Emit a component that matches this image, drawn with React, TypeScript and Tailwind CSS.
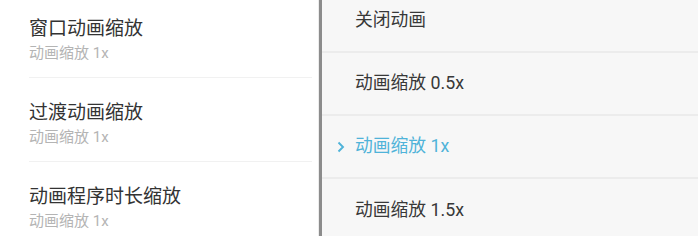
import React from 'react';

const font = { fontFamily: 'Roboto, "Noto Sans CJK SC", "Noto Sans", sans-serif' };

const settings = [
  { title: '窗口动画缩放', value: '动画缩放 1x' },
  { title: '过渡动画缩放', value: '动画缩放 1x' },
  { title: '动画程序时长缩放', value: '动画缩放 1x' },
];

const options = ['关闭动画', '动画缩放 0.5x', '动画缩放 1x', '动画缩放 1.5x'];

export default function App() {
  const selected = 2;
  return (
    <div className="flex h-[236px] w-[698px] overflow-hidden bg-white" style={font}>
      {/* settings list */}
      <div className="w-[319px] shrink-0 bg-white border-r border-[#ececec] -mt-[6px]">
        {settings.map((s, i) => (
          <div key={i} className="ml-[29px] mr-[6px] h-[84px] border-b border-[#f1f1f1] pt-[22px]">
            <div className="text-[19px] leading-[26px] text-[#333333]">{s.title}</div>
            <div className="text-[15px] leading-[22px] text-[#b4b4b4]">{s.value}</div>
          </div>
        ))}
      </div>
      <div className="w-[3px] shrink-0 bg-[#8c8c8c]" />
      {/* picker */}
      <div className="flex-1 bg-[#f7f7f7] -mt-[10px]">
        {options.map((o, i) => (
          <div
            key={i}
            className={
              'flex h-[63px] items-center border-b-2 border-[#ececec] last:border-b-0 ' +
              (i === selected ? 'text-[#4fb3d9]' : 'text-[#383838]')
            }
          >
            <div className="flex w-[33px] justify-end pr-[10px]">
              {i === selected && (
                <svg width="8" height="12" viewBox="0 0 8 12" fill="none">
                  <path d="M1.5 1.5L6 6L1.5 10.5" stroke="#4fb3d9" strokeWidth="1.9" />
                </svg>
              )}
            </div>
            <span className="text-[17.8px]">{o}</span>
          </div>
        ))}
      </div>
    </div>
  );
}
